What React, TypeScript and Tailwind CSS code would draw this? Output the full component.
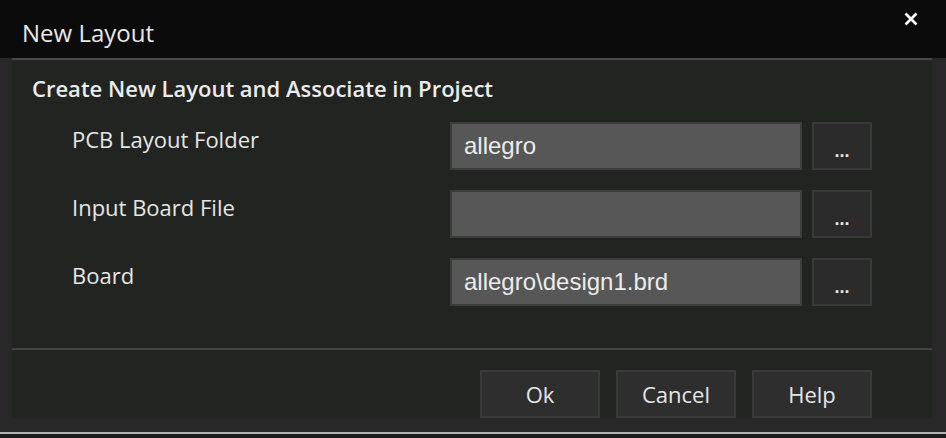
import { useState } from "react";

type RowProps = {
    label: string;
    value: string;
};

const font = "font-['Segoe_UI','Open_Sans',sans-serif]";

const BrowseRow = ({ label, value }: RowProps) => {
    const [text, setText] = useState(value);

    return (
        <div className="flex h-[48px]">
            <label className={`w-[438px] pl-[60px] pt-[2px] text-[22px] leading-[30px] text-[#e6e6e6] ${font}`}>{label}</label>
            <input
                className="w-[352px] h-[48px] bg-[#575757] border-2 border-[#3d3d3d] px-[12px] text-[24px] text-[#ececec] font-['Liberation_Sans',Arial,sans-serif] outline-none"
                value={text}
                onChange={(e) => setText(e.target.value)}
            />
            <button className="ml-[10px] w-[60px] h-[48px] bg-[#2b2b2b] border-2 border-[#393939] text-[#e6e6e6] text-[18px] pt-[10px] font-['Liberation_Sans',Arial,sans-serif] font-bold cursor-pointer">...</button>
        </div>
    );
}

const DialogButton = ({ label }: { label: string }) => (
    <button className={`w-[120px] h-[48px] bg-[#2e2e2e] border-2 border-[#3a3a3a] text-[22px] text-[#e6e6e6] ${font} cursor-pointer`}>{label}</button>
);

const App = () => {
    return (
        <div className="w-[946px] h-[438px] bg-[#282828] flex flex-col overflow-hidden">
            <div className="h-[58px] bg-[#0b0b0b] flex items-start shrink-0">
                <span className={`pl-[22px] pt-[17px] text-[24px] leading-[32px] text-[#e8e8e8] ${font}`}>New Layout</span>
                <button className="ml-auto mr-[28px] mt-[12px] w-[14px] h-[14px] cursor-pointer">
                    <svg viewBox="0 0 14 14" width="14" height="14">
                        <path d="M1.5 1.5 L12.5 12.5 M12.5 1.5 L1.5 12.5" stroke="#ffffff" strokeWidth="2.6" />
                    </svg>
                </button>
            </div>
            <div className="ml-[12px] w-[920px] h-[360px] border-t-2 border-[#4b4b4b] bg-[#222422] flex flex-col shrink-0">
                <div className={`h-[56px] pl-[20px] flex items-center text-[22px] font-semibold text-[#ececec] ${font}`}>
                    Create New Layout and Associate in Project
                </div>
                <div className="mt-[6px] flex flex-col gap-[20px]">
                    <BrowseRow label="PCB Layout Folder" value="allegro" />
                    <BrowseRow label="Input Board File" value="" />
                    <BrowseRow label="Board" value="allegro\design1.brd" />
                </div>
                <div className="mt-[42px] h-[2px] bg-[#434343]" />
                <div className="mt-[20px] flex justify-end gap-[16px] pr-[60px]">
                    <DialogButton label="Ok" />
                    <DialogButton label="Cancel" />
                    <DialogButton label="Help" />
                </div>
            </div>
            <div className="mt-[14px] h-[2px] bg-[#b2b2b2] shrink-0" />
            <div className="flex-1 bg-[#1d1d1d]" />
        </div>
    );
}

export default App;
